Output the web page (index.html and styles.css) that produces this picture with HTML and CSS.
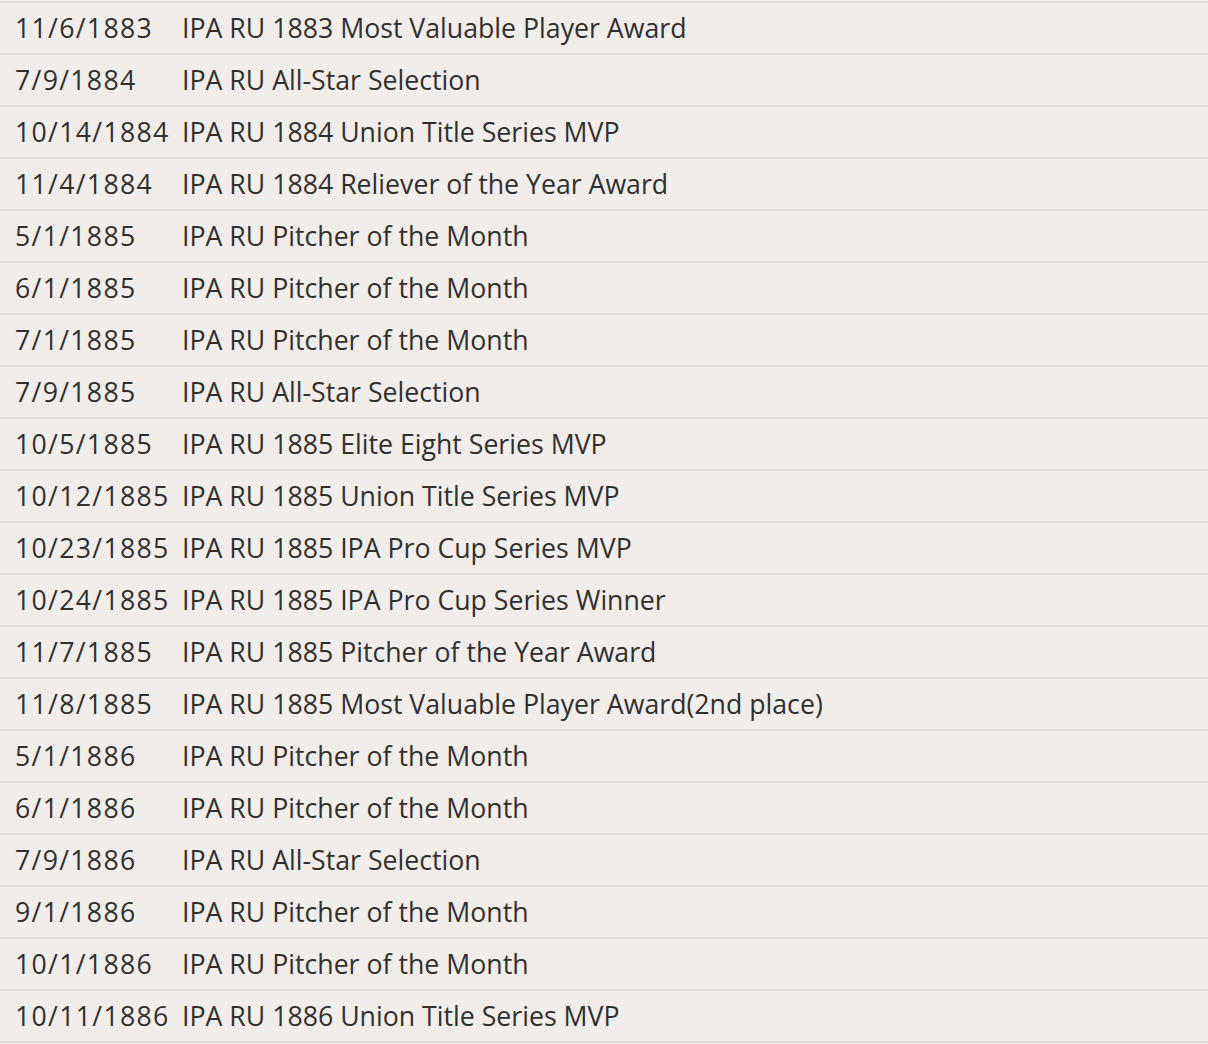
FILE: index.html
```html
<!DOCTYPE html>
<html>
<head>
<meta charset="utf-8">
<link rel="stylesheet" href="styles.css">
</head>
<body>
<div class="awards">
  <div class="row"><span class="date">11/6/1883</span><span class="award">IPA RU 1883 Most Valuable Player Award</span></div>
  <div class="row"><span class="date">7/9/1884</span><span class="award">IPA RU All-Star Selection</span></div>
  <div class="row"><span class="date">10/14/1884</span><span class="award">IPA RU 1884 Union Title Series MVP</span></div>
  <div class="row"><span class="date">11/4/1884</span><span class="award">IPA RU 1884 Reliever of the Year Award</span></div>
  <div class="row"><span class="date">5/1/1885</span><span class="award">IPA RU Pitcher of the Month</span></div>
  <div class="row"><span class="date">6/1/1885</span><span class="award">IPA RU Pitcher of the Month</span></div>
  <div class="row"><span class="date">7/1/1885</span><span class="award">IPA RU Pitcher of the Month</span></div>
  <div class="row"><span class="date">7/9/1885</span><span class="award">IPA RU All-Star Selection</span></div>
  <div class="row"><span class="date">10/5/1885</span><span class="award">IPA RU 1885 Elite Eight Series MVP</span></div>
  <div class="row"><span class="date">10/12/1885</span><span class="award">IPA RU 1885 Union Title Series MVP</span></div>
  <div class="row"><span class="date">10/23/1885</span><span class="award">IPA RU 1885 IPA Pro Cup Series MVP</span></div>
  <div class="row"><span class="date">10/24/1885</span><span class="award">IPA RU 1885 IPA Pro Cup Series Winner</span></div>
  <div class="row"><span class="date">11/7/1885</span><span class="award">IPA RU 1885 Pitcher of the Year Award</span></div>
  <div class="row"><span class="date">11/8/1885</span><span class="award">IPA RU 1885 Most Valuable Player Award(2nd place)</span></div>
  <div class="row"><span class="date">5/1/1886</span><span class="award">IPA RU Pitcher of the Month</span></div>
  <div class="row"><span class="date">6/1/1886</span><span class="award">IPA RU Pitcher of the Month</span></div>
  <div class="row"><span class="date">7/9/1886</span><span class="award">IPA RU All-Star Selection</span></div>
  <div class="row"><span class="date">9/1/1886</span><span class="award">IPA RU Pitcher of the Month</span></div>
  <div class="row"><span class="date">10/1/1886</span><span class="award">IPA RU Pitcher of the Month</span></div>
  <div class="row"><span class="date">10/11/1886</span><span class="award">IPA RU 1886 Union Title Series MVP</span></div>
</div>
</body>
</html>
```
FILE: styles.css
```css
html, body {
  margin: 0;
  padding: 0;
  background: #f1edea;
}
body {
  font-family: "Open Sans", "Noto Sans", sans-serif;
  font-size: 26.7px;
  color: #303030;
}
.awards {
  padding-top: 1px;
}
.row {
  display: flex;
  align-items: center;
  height: 50px;
  padding-bottom: 2px;
  box-sizing: content-box;
  height: 48px;
  border-top: 2px solid #dbd7d4;
}
.row:last-child {
  border-bottom: 2px solid #dbd7d4;
}
.date {
  width: 182px;
  padding-left: 15px;
  flex: none;
  box-sizing: border-box;
  white-space: nowrap;
  letter-spacing: 1.3px;
}
.award {
  white-space: nowrap;
}
```
